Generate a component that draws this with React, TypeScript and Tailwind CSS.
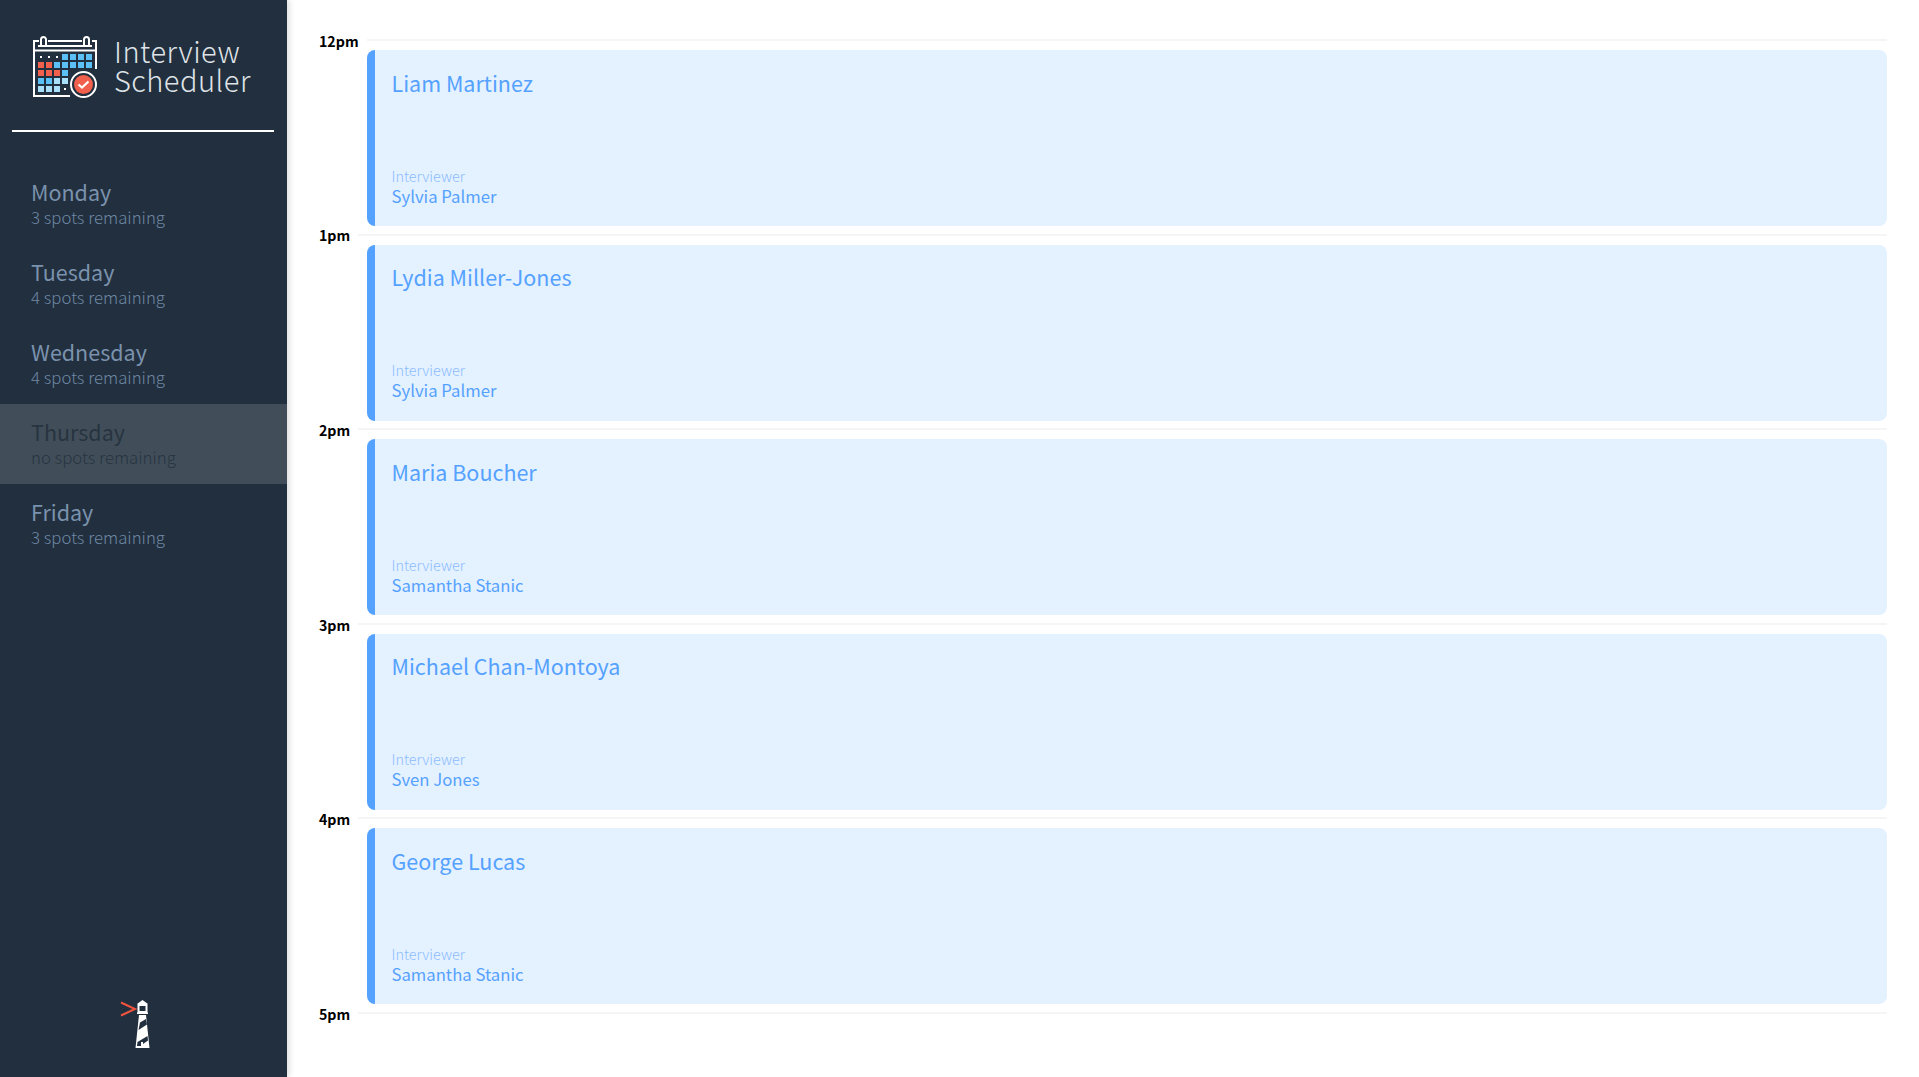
const days = [
  { name: "Monday", spots: "3 spots remaining" },
  { name: "Tuesday", spots: "4 spots remaining" },
  { name: "Wednesday", spots: "4 spots remaining" },
  { name: "Thursday", spots: "no spots remaining", selected: true },
  { name: "Friday", spots: "3 spots remaining" },
];

const appointments = [
  { time: "12pm", student: "Liam Martinez", interviewer: "Sylvia Palmer" },
  { time: "1pm", student: "Lydia Miller-Jones", interviewer: "Sylvia Palmer" },
  { time: "2pm", student: "Maria Boucher", interviewer: "Samantha Stanic" },
  { time: "3pm", student: "Michael Chan-Montoya", interviewer: "Sven Jones" },
  { time: "4pm", student: "George Lucas", interviewer: "Samantha Stanic" },
];

const BLUE = "#5ac0f5";
const PALE = "#a8e0fb";
const RED = "#f0604d";

const cells: [number, number, string][] = [
  [42, 28, BLUE], [50, 28, BLUE], [58, 28, BLUE], [66, 28, BLUE],
  [18, 36, RED], [26, 36, RED], [34, 36, BLUE], [42, 36, BLUE], [50, 36, BLUE], [58, 36, BLUE], [66, 36, BLUE],
  [18, 44, RED], [26, 44, RED], [34, 44, RED], [42, 44, BLUE],
  [18, 52, BLUE], [26, 52, BLUE], [34, 52, PALE], [42, 52, PALE],
  [18, 60, PALE], [26, 60, PALE], [34, 60, PALE],
];

function Logo() {
  return (
    <svg width="90" height="80" viewBox="0 0 90 80" className="shrink-0">
      <g fill="none" stroke="#fff" strokeWidth="2">
        <path d="M19 15H14V70H50" />
        <path d="M28 15H62M72 15H76V43" />
        <path d="M18 20H72" />
        <path d="M14 24.5H76" />
        <path d="M21 20V13.5a2.5 2.5 0 0 1 5 0V20" />
        <path d="M64 20V13.5a2.5 2.5 0 0 1 5 0V20" />
      </g>
      {cells.map(([x, y, c]) => (
        <rect key={`${x}-${y}`} x={x} y={y} width="6" height="6" fill={c} />
      ))}
      <rect x="20" y="30" width="2" height="2" fill="#fff" />
      <rect x="28" y="30" width="2" height="2" fill="#fff" />
      <rect x="36" y="30" width="2" height="2" fill="#fff" />
      <rect x="44" y="62" width="2" height="2" fill="#fff" />
      <circle cx="63.5" cy="58.5" r="12.5" fill="#222f3e" stroke="#fff" strokeWidth="2" />
      <circle cx="63.5" cy="58.5" r="9.5" fill={RED} />
      <path d="M58.5 58.5L62 61.5L68.5 55.5" fill="none" stroke="#fff" strokeWidth="2.2" />
    </svg>
  );
}

function Lighthouse() {
  return (
    <svg width="70" height="70" viewBox="0 0 70 70">
      <path d="M11 12.5L25 19L11 25.5" fill="none" stroke="#f0543e" strokeWidth="2" />
      <path d="M27 14L32.5 10L38 14Z" fill="#fff" />
      <rect x="28.5" y="15" width="8" height="7" fill="none" stroke="#fff" strokeWidth="2" />
      <rect x="27" y="22.5" width="11" height="1.5" fill="#fff" />
      <path d="M29 25H36L39.5 58H25.5Z" fill="#fff" />
      <path d="M30 32.5L36 29L37 34.5L28.5 40Z" fill="#222f3e" />
      <path d="M27.5 52L37.5 46L38 50.5L33 54V52H31V56H27Z" fill="#222f3e" />
    </svg>
  );
}

function TimeHeader({ time }: { time: string }) {
  return (
    <header className="flex items-center h-[16px]">
      <h4 className="text-[14.2px] font-semibold text-black leading-none mr-[8px]">{time}</h4>
      <hr className="grow border-0 h-[2px] bg-[#f4f5f5] -mt-[2px]" />
    </header>
  );
}

function Appointment({ time, student, interviewer }: { time: string; student: string; interviewer: string }) {
  return (
    <article className="h-[194.6px]">
      <TimeHeader time={time} />
      <div className="ml-[47.5px] mt-[1px] h-[176px] bg-[#e4f1ff] border-l-[8px] border-[#55a1ff] rounded-[8px] pl-[17px] pt-[16.5px] pb-[20.5px] flex flex-col justify-between text-[#55a1ff]">
        <h2 className="text-[21.5px] leading-[32px] font-normal">{student}</h2>
        <div>
          <p className="text-[14.4px] leading-[20px] font-light text-[#8cbcff]">Interviewer</p>
          <p className="text-[16.7px] leading-[20px] font-normal">{interviewer}</p>
        </div>
      </div>
    </article>
  );
}

export default function App() {
  return (
    <div className="flex h-[1077px] overflow-hidden bg-white font-['Noto_Sans_CJK_SC','Source_Sans_Pro',sans-serif]">
      <nav className="w-[287px] shrink-0 bg-[#222f3e] flex flex-col shadow-[2px_0_6px_rgba(0,0,0,0.15)] relative z-10">
        <div className="flex items-center pl-[20px] pt-[27px] h-[105px]">
          <Logo />
          <div className="ml-[4px] -mt-[2px] text-[29px] leading-[29px] font-light text-[#dfe3e7] tracking-[0.5px]">
            Interview
            <br />
            Scheduler
          </div>
        </div>
        <hr className="border-0 h-[2px] bg-white ml-[12px] mr-[13px] mt-[25px]" />
        <ul className="mt-[32px]">
          {days.map((d) => (
            <li
              key={d.name}
              className={`h-[80px] pl-[31px] pt-[15px] ${d.selected ? "bg-[#414e5a] text-[#27343f]" : "text-[#7a92ad]"}`}
            >
              <h2 className="text-[21.5px] leading-[26px] font-normal">{d.name}</h2>
              <h3 className={`text-[16.8px] leading-[25px] font-light ${d.selected ? "" : "text-[#6f88a5]"}`}>{d.spots}</h3>
            </li>
          ))}
        </ul>
        <div className="mt-auto flex justify-center pb-[17px] pl-[2px]">
          <Lighthouse />
        </div>
      </nav>
      <main className="grow pt-[33px] pl-[32px] pr-[32px]">
        {appointments.map((a) => (
          <Appointment key={a.time} {...a} />
        ))}
        <TimeHeader time="5pm" />
      </main>
    </div>
  );
}
